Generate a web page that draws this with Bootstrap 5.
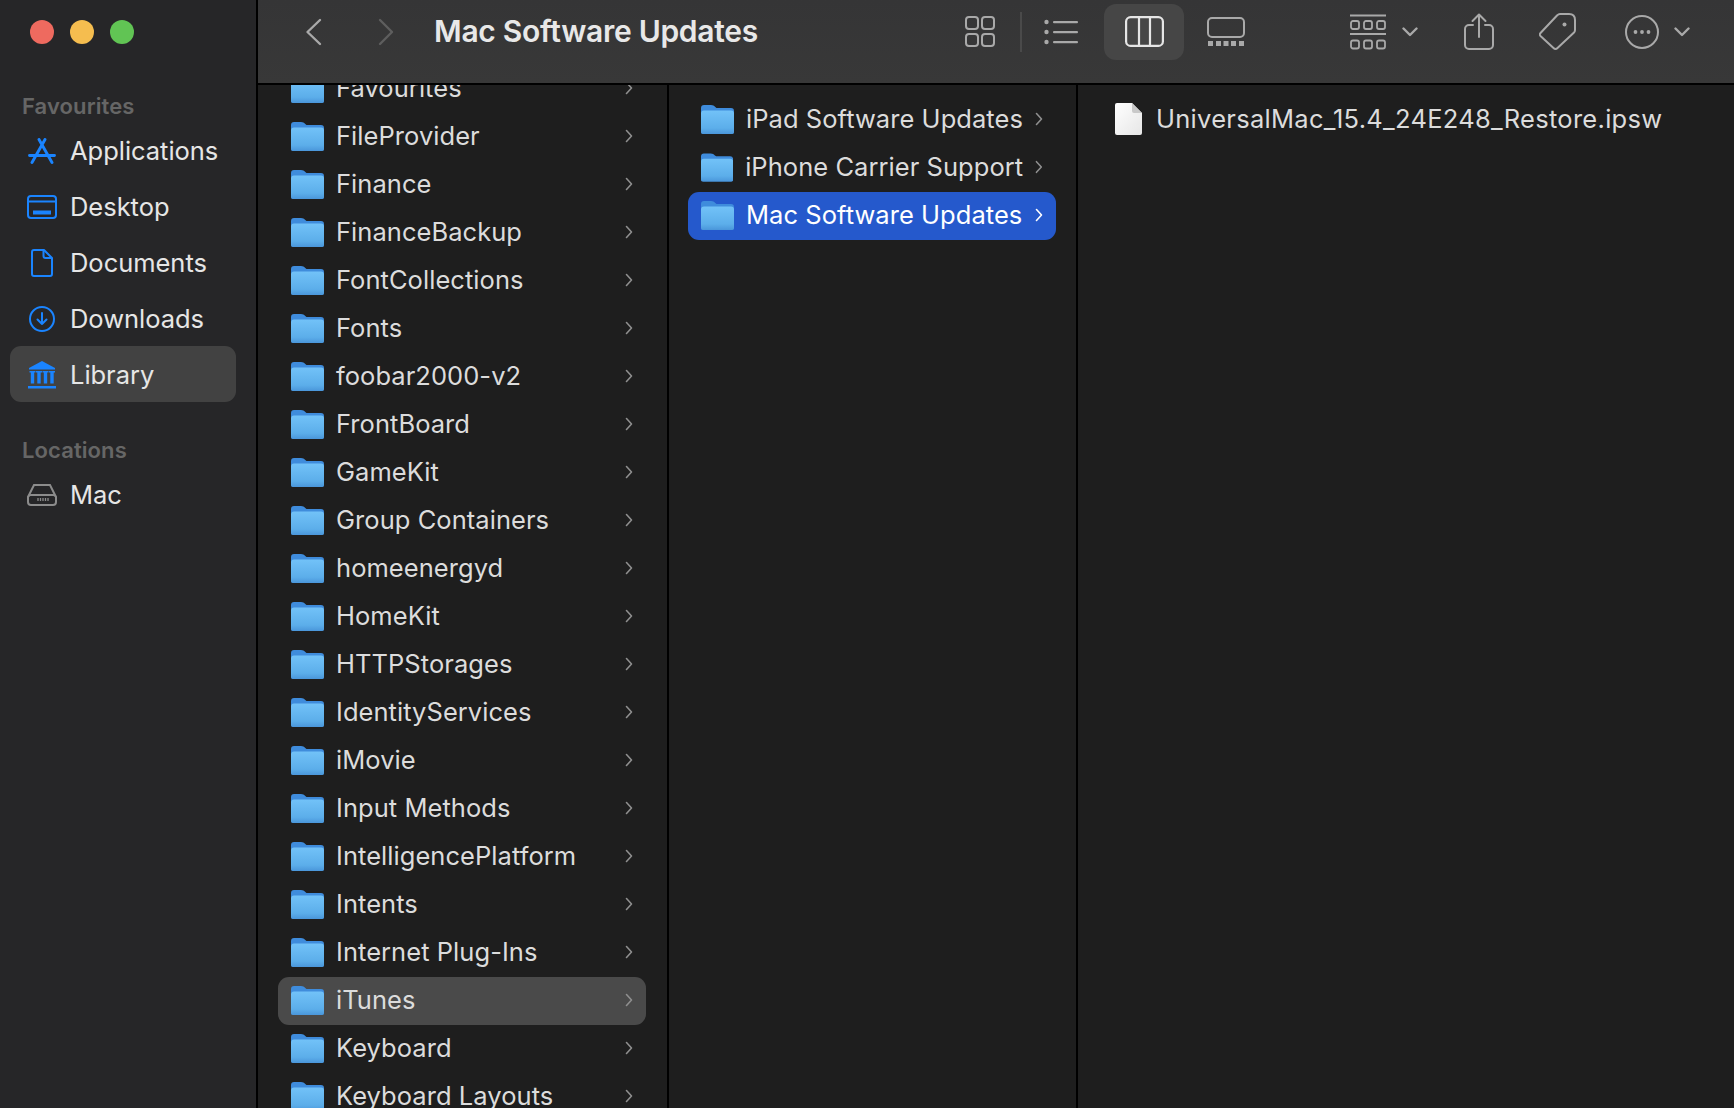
<!DOCTYPE html>
<html lang="en">
<head>
<meta charset="utf-8">
<title>Mac Software Updates</title>
<link href="https://cdn.jsdelivr.net/npm/bootstrap@5.3.0/dist/css/bootstrap.min.css" rel="stylesheet">
<style>
html,body{height:100%;margin:0;overflow:hidden;background:#1e1e1e}
body{font-family:Inter,"Liberation Sans",sans-serif;-webkit-font-smoothing:antialiased}
.fx-app{height:1108px}
.fx-side{width:258px;background:#262628;border-right:2px solid #000;color:#e6e6e6;font-size:25.5px;letter-spacing:-.03px}
.fx-lights{height:89px;padding:20px 0 0 30px;gap:16px}
.fx-dot{width:24px;height:24px;border-radius:50%}
.fx-red{background:#ee6a5f}.fx-yellow{background:#f5bd4f}.fx-green{background:#61c454}
.fx-head{height:33px;padding:2px 0 0 22px;font-size:22px;font-weight:600;color:#666;letter-spacing:.1px}
.fx-head-gap{margin-top:31px}
.fx-item{height:56px;margin:0 20px 0 10px;padding:2px 0 0 14px;border-radius:11px}
.fx-item-on{background:#424242}
.fx-slot{width:36px;margin-right:10px;color:#1a84ff}
.fx-slot-grey{color:#8c8c8c}
.fx-main{min-width:0}
.fx-bar{height:85px;background:linear-gradient(#353536,#383838);border-bottom:2px solid #000;padding:0 44px 20px 47px;color:#a9a9a9}
.fx-title{margin-left:40px;font-size:30px;font-weight:600;color:#e8e8e8;letter-spacing:-.28px;white-space:nowrap}
.fx-fwd{margin-left:56px;color:#5e5e5e}
.fx-sep{width:2px;height:40px;background:#4a4a4a;margin-left:25px}
.fx-ml-22{margin-left:22px}.fx-ml-26{margin-left:26px}.fx-ml-23{margin-left:23px}.fx-ml-105{margin-left:105px}
.fx-ml-16{margin-left:16px}.fx-ml-46{margin-left:46px}.fx-ml-45{margin-left:45px}.fx-ml-49{margin-left:49px}.fx-ml-15{margin-left:15px}
.fx-pill{width:80px;height:56px;border-radius:12px;background:#464646;color:#e6e6e6}
.fx-cols{height:1023px;background:#1e1e1e;color:#dcdcdc;font-size:25.5px;letter-spacing:.05px}
.fx-col{overflow:hidden;border-right:2px solid #000}
.fx-col-a{width:411px}
.fx-col-b{width:409px}
.fx-list{margin:-20px 21px 0 20px;padding:0;list-style:none}
.fx-list-b{margin:11px 20px 0 19px;padding:0;list-style:none}
.fx-row{height:48px;padding:0 13px 2px 13px;border-radius:11px;gap:12px;white-space:nowrap}
.fx-row-hover{background:#4a4a4a}
.fx-row-sel{background:#2559cc;color:#fff}
.fx-chev{color:#8f8f8f}
.fx-row-sel .fx-chev{color:#fff}
.fx-col-c{padding:10px 0 0 37px}
.fx-file{height:48px;gap:14px;white-space:nowrap;letter-spacing:.28px}
</style>
</head>
<body>
<svg width="0" height="0" class="position-absolute">
<defs>
<linearGradient id="gfold" x1="0" y1="0" x2="0" y2="1"><stop offset="0" stop-color="#72c2f8"/><stop offset=".75" stop-color="#5caeea"/><stop offset="1" stop-color="#4a96da"/></linearGradient>
<linearGradient id="gdoc" x1="0" y1="0" x2="1" y2="1"><stop offset="0" stop-color="#fff"/><stop offset="1" stop-color="#e6e6e6"/></linearGradient>
<symbol id="folder" viewBox="0 0 33 29">
<path d="M2 29a2 2 0 0 1-2-2V3a3 3 0 0 1 3-3h7c2 0 3 .8 4 1.800L15.500 3H30a3 3 0 0 1 3 3v21a2 2 0 0 1-2 2z" fill="#3f8cdc"/>
<path d="M0 8.500a3 3 0 0 1 3-3h27a3 3 0 0 1 3 3v18a2.500 2.500 0 0 1-2.500 2.500h-28A2.500 2.500 0 0 1 0 26.500z" fill="url(#gfold)"/>
</symbol>
<symbol id="chev" viewBox="0 0 8 14"><path d="M1.500 1.500 6.500 7l-5 5.500" fill="none" stroke="currentColor" stroke-width="1.600" stroke-linecap="round" stroke-linejoin="round"/></symbol>
<symbol id="down" viewBox="0 0 16 10"><path d="M1.500 1.500 8 8l6.500-6.500" fill="none" stroke="currentColor" stroke-width="2.400" stroke-linecap="round" stroke-linejoin="round"/></symbol>
</defs>
</svg>
<div class="fx-app d-flex">
<aside class="fx-side flex-shrink-0">
<div class="fx-lights d-flex"><span class="fx-dot fx-red"></span><span class="fx-dot fx-yellow"></span><span class="fx-dot fx-green"></span></div>
<div class="fx-head d-flex align-items-center">Favourites</div>
<div class="fx-item d-flex align-items-center"><span class="fx-slot d-flex justify-content-center"><svg width="28" height="27" viewBox="0 0 28 27" fill="none" stroke="currentColor" stroke-width="2.900" stroke-linecap="round"><path d="M11 1.500 24 24.500M17 1.500 4 24.500M1.500 17.500h25"/></svg></span>Applications</div>
<div class="fx-item d-flex align-items-center"><span class="fx-slot d-flex justify-content-center"><svg width="30" height="24" viewBox="0 0 30 24" fill="none" stroke="currentColor" stroke-width="2"><rect x="1" y="1" width="28" height="22" rx="3"/><path d="M1 6.500h28"/><rect x="6" y="15.500" width="18" height="4" fill="currentColor" stroke="none"/></svg></span>Desktop</div>
<div class="fx-item d-flex align-items-center"><span class="fx-slot d-flex justify-content-center"><svg width="22" height="28" viewBox="0 0 22 28" fill="none" stroke="currentColor" stroke-width="2" stroke-linejoin="round"><path d="M3 1h10l8 8v16a2 2 0 0 1-2 2H3a2 2 0 0 1-2-2V3a2 2 0 0 1 2-2z"/><path d="M12.500 1.500V7a2 2 0 0 0 2 2h6"/></svg></span>Documents</div>
<div class="fx-item d-flex align-items-center"><span class="fx-slot d-flex justify-content-center"><svg width="26" height="26" viewBox="0 0 26 26" fill="none" stroke="currentColor" stroke-width="2" stroke-linecap="round" stroke-linejoin="round"><circle cx="13" cy="13" r="12"/><path d="M13 7v11M8.500 13.500 13 18l4.500-4.500"/></svg></span>Downloads</div>
<div class="fx-item fx-item-on d-flex align-items-center"><span class="fx-slot d-flex justify-content-center"><svg width="28" height="28" viewBox="0 0 28 28" fill="currentColor"><path d="M14 0 27 7v1.500H1V7z"/><path d="M1.500 10h6v1.500H6.200v11h-3.400v-11H1.500zM8 10h6v1.500h-1.300v11H9.300v-11H8zM14.500 10h6v1.500h-1.300v11h-3.400v-11h-1.300zM21 10h6v1.500h-1.300v11h-3.400v-11H21z"/><rect x="0" y="25" width="28" height="2.500"/></svg></span>Library</div>
<div class="fx-head fx-head-gap d-flex align-items-center">Locations</div>
<div class="fx-item d-flex align-items-center"><span class="fx-slot fx-slot-grey d-flex justify-content-center"><svg width="30" height="22" viewBox="0 0 30 22" fill="none" stroke="currentColor" stroke-width="2"><path d="M7 1h16l6 12v5a3 3 0 0 1-3 3H4a3 3 0 0 1-3-3v-5z"/><path d="M1 13a3 3 0 0 1 3-2h22a3 3 0 0 1 3 2"/><path d="M11 14v3M13.500 14v3M16 14v3M18.500 14v3M21 14v3" stroke-width="1.300"/></svg></span>Mac</div>
</aside>
<div class="fx-main flex-grow-1 d-flex flex-column">
<header class="fx-bar d-flex align-items-center flex-shrink-0">
<svg width="17" height="28" viewBox="0 0 17 28" fill="none" stroke="currentColor" stroke-width="2.400" stroke-linecap="round" stroke-linejoin="round"><path d="M15 2 2.500 14 15 26"/></svg>
<svg class="fx-fwd" width="16" height="28" viewBox="0 0 16 28" fill="none" stroke="currentColor" stroke-width="2.400" stroke-linecap="round" stroke-linejoin="round"><path d="M2 2l12 12L2 26"/></svg>
<div class="fx-title">Mac Software Updates</div>
<svg class="ms-auto" width="30" height="31" viewBox="0 0 30 31" fill="none" stroke="currentColor" stroke-width="2"><rect x="1" y="1" width="12" height="12" rx="3"/><rect x="17" y="1" width="12" height="12" rx="3"/><rect x="1" y="18" width="12" height="12" rx="3"/><rect x="17" y="18" width="12" height="12" rx="3"/></svg>
<span class="fx-sep"></span>
<svg class="fx-ml-22" width="34" height="26" viewBox="0 0 34 26" fill="currentColor"><circle cx="2.500" cy="3" r="2.200"/><circle cx="2.500" cy="13" r="2.200"/><circle cx="2.500" cy="23" r="2.200"/><rect x="9" y="2" width="25" height="2.200" rx="1"/><rect x="9" y="12" width="25" height="2.200" rx="1"/><rect x="9" y="22" width="25" height="2.200" rx="1"/></svg>
<div class="fx-pill fx-ml-26 d-flex align-items-center justify-content-center"><svg width="39" height="31" viewBox="0 0 39 31" fill="none" stroke="currentColor" stroke-width="2.200"><rect x="1.100" y="1.100" width="36.800" height="28.800" rx="4.500"/><path d="M14 1v29M25 1v29"/></svg></div>
<svg class="fx-ml-23" width="38" height="30" viewBox="0 0 38 30" fill="none" stroke="currentColor"><rect x="1" y="1" width="36" height="19" rx="4" stroke-width="2"/><g fill="currentColor" stroke="none"><rect x="1" y="24" width="5" height="5"/><rect x="9" y="24" width="5" height="5"/><rect x="16.500" y="24" width="5" height="5"/><rect x="24" y="24" width="5" height="5"/><rect x="32" y="24" width="5" height="5"/></g></svg>
<svg class="fx-ml-105" width="36" height="36" viewBox="0 0 36 36" fill="none" stroke="currentColor" stroke-width="1.800"><path d="M0 1.500h36M0 20h36"/><rect x="1" y="7" width="8" height="8" rx="2"/><rect x="14" y="7" width="8" height="8" rx="2"/><rect x="27" y="7" width="8" height="8" rx="2"/><rect x="1" y="26.500" width="8" height="8" rx="2"/><rect x="14" y="26.500" width="8" height="8" rx="2"/><rect x="27" y="26.500" width="8" height="8" rx="2"/></svg>
<svg class="fx-ml-16" width="16" height="10"><use href="#down"/></svg>
<svg class="fx-ml-46" width="30" height="37" viewBox="0 0 30 37" fill="none" stroke="currentColor" stroke-width="2" stroke-linecap="round" stroke-linejoin="round"><path d="M9 12H5a4 4 0 0 0-4 4v16a4 4 0 0 0 4 4h20a4 4 0 0 0 4-4V16a4 4 0 0 0-4-4h-4"/><path d="M15 24V1.500M8.500 8 15 1.500 21.500 8"/></svg>
<svg class="fx-ml-45" width="37" height="37" viewBox="0 0 37 37" fill="none" stroke="currentColor" stroke-width="2" stroke-linejoin="round"><path d="M1.500 20 18 2.500q1.500-1.500 3-1.500h9q6 0 6 6v10q0 1.500-1 2.500L18.500 35q-2 2-4 0L1.500 23q-1.500-1.500 0-3z"/><circle cx="25.500" cy="11.500" r="2" fill="currentColor" stroke="none"/></svg>
<svg class="fx-ml-49" width="34" height="34" viewBox="0 0 34 34" fill="currentColor"><circle cx="17" cy="17" r="16" fill="none" stroke="currentColor" stroke-width="2"/><circle cx="10.500" cy="17" r="1.900"/><circle cx="17" cy="17" r="1.900"/><circle cx="23.500" cy="17" r="1.900"/></svg>
<svg class="fx-ml-15" width="16" height="10"><use href="#down"/></svg>
</header>
<div class="fx-cols d-flex flex-grow-1">
<section class="fx-col fx-col-a flex-shrink-0">
<ul class="fx-list">
<li class="fx-row d-flex align-items-center"><svg width="33" height="29"><use href="#folder"/></svg><span class="flex-grow-1">Favourites</span><svg class="fx-chev" width="8" height="14"><use href="#chev"/></svg></li>
<li class="fx-row d-flex align-items-center"><svg width="33" height="29"><use href="#folder"/></svg><span class="flex-grow-1">FileProvider</span><svg class="fx-chev" width="8" height="14"><use href="#chev"/></svg></li>
<li class="fx-row d-flex align-items-center"><svg width="33" height="29"><use href="#folder"/></svg><span class="flex-grow-1">Finance</span><svg class="fx-chev" width="8" height="14"><use href="#chev"/></svg></li>
<li class="fx-row d-flex align-items-center"><svg width="33" height="29"><use href="#folder"/></svg><span class="flex-grow-1">FinanceBackup</span><svg class="fx-chev" width="8" height="14"><use href="#chev"/></svg></li>
<li class="fx-row d-flex align-items-center"><svg width="33" height="29"><use href="#folder"/></svg><span class="flex-grow-1">FontCollections</span><svg class="fx-chev" width="8" height="14"><use href="#chev"/></svg></li>
<li class="fx-row d-flex align-items-center"><svg width="33" height="29"><use href="#folder"/></svg><span class="flex-grow-1">Fonts</span><svg class="fx-chev" width="8" height="14"><use href="#chev"/></svg></li>
<li class="fx-row d-flex align-items-center"><svg width="33" height="29"><use href="#folder"/></svg><span class="flex-grow-1">foobar2000-v2</span><svg class="fx-chev" width="8" height="14"><use href="#chev"/></svg></li>
<li class="fx-row d-flex align-items-center"><svg width="33" height="29"><use href="#folder"/></svg><span class="flex-grow-1">FrontBoard</span><svg class="fx-chev" width="8" height="14"><use href="#chev"/></svg></li>
<li class="fx-row d-flex align-items-center"><svg width="33" height="29"><use href="#folder"/></svg><span class="flex-grow-1">GameKit</span><svg class="fx-chev" width="8" height="14"><use href="#chev"/></svg></li>
<li class="fx-row d-flex align-items-center"><svg width="33" height="29"><use href="#folder"/></svg><span class="flex-grow-1">Group Containers</span><svg class="fx-chev" width="8" height="14"><use href="#chev"/></svg></li>
<li class="fx-row d-flex align-items-center"><svg width="33" height="29"><use href="#folder"/></svg><span class="flex-grow-1">homeenergyd</span><svg class="fx-chev" width="8" height="14"><use href="#chev"/></svg></li>
<li class="fx-row d-flex align-items-center"><svg width="33" height="29"><use href="#folder"/></svg><span class="flex-grow-1">HomeKit</span><svg class="fx-chev" width="8" height="14"><use href="#chev"/></svg></li>
<li class="fx-row d-flex align-items-center"><svg width="33" height="29"><use href="#folder"/></svg><span class="flex-grow-1">HTTPStorages</span><svg class="fx-chev" width="8" height="14"><use href="#chev"/></svg></li>
<li class="fx-row d-flex align-items-center"><svg width="33" height="29"><use href="#folder"/></svg><span class="flex-grow-1">IdentityServices</span><svg class="fx-chev" width="8" height="14"><use href="#chev"/></svg></li>
<li class="fx-row d-flex align-items-center"><svg width="33" height="29"><use href="#folder"/></svg><span class="flex-grow-1">iMovie</span><svg class="fx-chev" width="8" height="14"><use href="#chev"/></svg></li>
<li class="fx-row d-flex align-items-center"><svg width="33" height="29"><use href="#folder"/></svg><span class="flex-grow-1">Input Methods</span><svg class="fx-chev" width="8" height="14"><use href="#chev"/></svg></li>
<li class="fx-row d-flex align-items-center"><svg width="33" height="29"><use href="#folder"/></svg><span class="flex-grow-1">IntelligencePlatform</span><svg class="fx-chev" width="8" height="14"><use href="#chev"/></svg></li>
<li class="fx-row d-flex align-items-center"><svg width="33" height="29"><use href="#folder"/></svg><span class="flex-grow-1">Intents</span><svg class="fx-chev" width="8" height="14"><use href="#chev"/></svg></li>
<li class="fx-row d-flex align-items-center"><svg width="33" height="29"><use href="#folder"/></svg><span class="flex-grow-1">Internet Plug-Ins</span><svg class="fx-chev" width="8" height="14"><use href="#chev"/></svg></li>
<li class="fx-row fx-row-hover d-flex align-items-center"><svg width="33" height="29"><use href="#folder"/></svg><span class="flex-grow-1">iTunes</span><svg class="fx-chev" width="8" height="14"><use href="#chev"/></svg></li>
<li class="fx-row d-flex align-items-center"><svg width="33" height="29"><use href="#folder"/></svg><span class="flex-grow-1">Keyboard</span><svg class="fx-chev" width="8" height="14"><use href="#chev"/></svg></li>
<li class="fx-row d-flex align-items-center"><svg width="33" height="29"><use href="#folder"/></svg><span class="flex-grow-1">Keyboard Layouts</span><svg class="fx-chev" width="8" height="14"><use href="#chev"/></svg></li>
</ul>
</section>
<section class="fx-col fx-col-b flex-shrink-0">
<ul class="fx-list-b">
<li class="fx-row d-flex align-items-center"><svg width="33" height="29"><use href="#folder"/></svg><span class="flex-grow-1">iPad Software Updates</span><svg class="fx-chev" width="8" height="14"><use href="#chev"/></svg></li>
<li class="fx-row d-flex align-items-center"><svg width="33" height="29"><use href="#folder"/></svg><span class="flex-grow-1">iPhone Carrier Support</span><svg class="fx-chev" width="8" height="14"><use href="#chev"/></svg></li>
<li class="fx-row fx-row-sel d-flex align-items-center"><svg width="33" height="29"><use href="#folder"/></svg><span class="flex-grow-1">Mac Software Updates</span><svg class="fx-chev" width="8" height="14"><use href="#chev"/></svg></li>
</ul>
</section>
<section class="fx-col-c flex-grow-1">
<div class="fx-file d-flex align-items-center">
<svg width="27" height="32" viewBox="0 0 27 32"><path d="M2 0h15l10 10v20a2 2 0 0 1-2 2H2a2 2 0 0 1-2-2V2a2 2 0 0 1 2-2z" fill="url(#gdoc)"/><path d="M17 0l10 10h-8a2 2 0 0 1-2-2z" fill="#c9c9c9"/></svg>
<span>UniversalMac_15.4_24E248_Restore.ipsw</span>
</div>
</section>
</div>
</div>
</div>
<script src="https://cdn.jsdelivr.net/npm/bootstrap@5.3.0/dist/js/bootstrap.bundle.min.js"></script>
</body>
</html>
